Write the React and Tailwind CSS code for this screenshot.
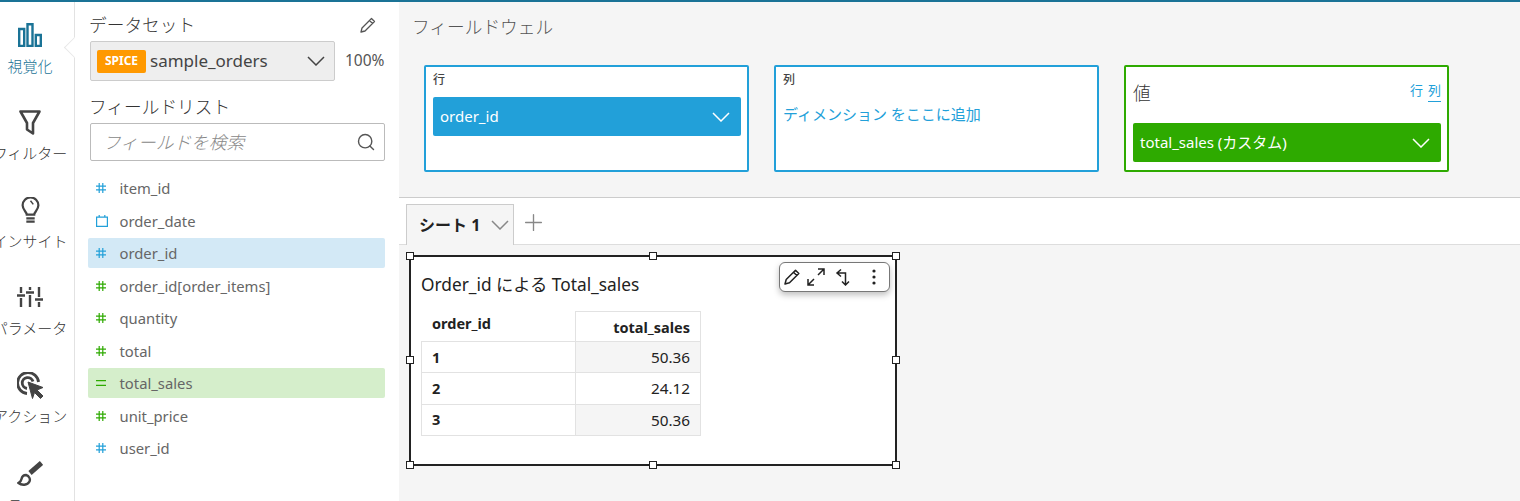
import { Plus, Search } from 'lucide-react';

const FONT = "font-['Noto_Sans','Noto_Sans_CJK_JP',sans-serif]";

const Chevron = ({ className }) => (
  <svg viewBox="0 0 18 10" className={`h-[10px] w-[18px] shrink-0 ${className}`} stroke="currentColor" strokeWidth="1.500" fill="none">
    <path d="M1 1l8 8 8-8" />
  </svg>
);

const Hash = ({ color }) => (
  <svg viewBox="0 0 10 10" className="h-[10px] w-[10px]" stroke={color} strokeWidth="1.200" fill="none">
    <path d="M3.200 0v10M6.800 0v10M0 3.200h10M0 6.800h10" />
  </svg>
);

const Calendar = () => (
  <svg viewBox="0 0 12 12" className="h-[12px] w-[12px]" stroke="#22a0d9" strokeWidth="1.200" fill="none">
    <path d="M.6 2.200h10.800v9.200H.6zM3.200 0v2.200M8.800 0v2.200" />
  </svg>
);

const Equals = () => (
  <svg viewBox="0 0 10 10" className="h-[10px] w-[10px]" stroke="#2eaa00" strokeWidth="1.200" fill="none">
    <path d="M0 2.600h10M0 7.400h10" />
  </svg>
);

const BarsIcon = () => (
  <svg viewBox="0 0 24 24" className="h-[24px] w-[24px]" stroke="#1a7396" strokeWidth="2.400" fill="none">
    <path d="M1.200 6h5v17h-5zM9.500 1.200h5V23h-5zM17.800 12h5v11h-5z" />
  </svg>
);

const FilterIcon = () => (
  <svg viewBox="0 0 22 25" className="h-[25px] w-[22px]" stroke="#444" strokeWidth="2.600" fill="none" strokeLinejoin="round">
    <path d="M1.500 1.500h19L14 13v10.500l-6-4V13z" />
  </svg>
);

const BulbIcon = () => (
  <svg viewBox="0 0 20 28" className="h-[26px] w-[19px]" stroke="#444" fill="none">
    <path d="M6 19c0-3-4.500-5-4.500-10a8.500 8.500 0 0 1 17 0c0 5-4.500 7-4.500 10z" strokeWidth="2.400" />
    <path d="M10 4l3 4" strokeWidth="1.600" />
    <path d="M5.500 23h9M5.500 26.500h9" strokeWidth="2.400" />
  </svg>
);

const SlidersIcon = () => (
  <svg viewBox="0 0 26 22" className="h-[22px] w-[26px]" stroke="#444" strokeWidth="2.400" fill="none">
    <path d="M4 1v6M4 12v9M13 1v3M13 9v12M22 1v10M22 16v5M0 9.500h8M9 6.500h8M18 13.500h8" />
  </svg>
);

const ActionIcon = () => (
  <svg viewBox="0 0 27 27" className="h-[27px] w-[27px]" fill="none" stroke="#444">
    <path d="M10 21.500A10.500 10.500 0 1 1 21.500 10" strokeWidth="2.800" />
    <path d="M10 16.500A5.500 5.500 0 1 1 16 9.500" strokeWidth="2.800" />
    <path d="M11 10l15 5.500-6 2.500 6 6-2.500 2.500-6-6-2 6z" fill="#444" stroke="#444" strokeWidth="1" strokeLinejoin="round" />
  </svg>
);

const BrushIcon = () => (
  <svg viewBox="0 0 26 26" className="h-[26px] w-[26px]" fill="none" stroke="#444">
    <path d="M13 12L24.500 2" strokeWidth="5" />
    <path d="M9 14c-3 0-4 1.500-4.500 4-.3 2-1.500 3-3 4 3 2.500 9 2.500 11-1.500 1-2 0-5.500-3.500-6.500z" strokeWidth="2.400" />
  </svg>
);

const RailItem = ({ icon, label, active, className }) => (
  <div className={`flex w-[60px] flex-col items-center ${className}`}>
    <div className="flex h-[28px] items-center justify-center">{icon}</div>
    <span className={`mt-[7px] whitespace-nowrap text-[15px] leading-[20px] font-light ${active ? 'text-[#1a7396]' : 'text-[#333]'}`}>
      {label}
    </span>
  </div>
);

const fields = [
  { name: 'item_id', icon: <Hash color="#22a0d9" /> },
  { name: 'order_date', icon: <Calendar /> },
  { name: 'order_id', icon: <Hash color="#22a0d9" />, bg: 'bg-[#d3e9f6]' },
  { name: 'order_id[order_items]', icon: <Hash color="#2eaa00" /> },
  { name: 'quantity', icon: <Hash color="#2eaa00" /> },
  { name: 'total', icon: <Hash color="#2eaa00" /> },
  { name: 'total_sales', icon: <Equals />, bg: 'bg-[#d5eecb]' },
  { name: 'unit_price', icon: <Hash color="#2eaa00" /> },
  { name: 'user_id', icon: <Hash color="#22a0d9" /> },
];

const rows = [
  { id: '1', value: '50.36', shade: true },
  { id: '2', value: '24.12', shade: false },
  { id: '3', value: '50.36', shade: true },
];

const Handle = ({ className }) => (
  <div className={`absolute h-[8px] w-[8px] border border-[#222] bg-white ${className}`} />
);

const Pill = ({ label, color }) => (
  <div className={`flex h-[39px] items-center justify-between rounded-[2px] pl-[7px] pr-[11px] text-[15px] text-white ${color}`}>
    <span>{label}</span>
    <Chevron className="text-white" />
  </div>
);

export default function App() {
  return (
    <div className={`flex h-[501px] w-[1520px] flex-col overflow-hidden bg-white ${FONT}`}>
      <div className="h-[2px] shrink-0 bg-[#1a7396]" />
      <div className="flex min-h-0 flex-1">
        {/* Left rail */}
        <div className="relative w-[75px] shrink-0 border-r border-[#e2e2e2]">
          <div className="flex h-full flex-col overflow-hidden">
            <RailItem className="mt-[19px]" icon={<BarsIcon />} label="視覚化" active />
            <RailItem className="mt-[32px]" icon={<FilterIcon />} label="フィルター" />
            <RailItem className="mt-[33px]" icon={<BulbIcon />} label="インサイト" />
            <RailItem className="mt-[32px]" icon={<SlidersIcon />} label="パラメータ" />
            <RailItem className="mt-[33px]" icon={<ActionIcon />} label="アクション" />
            <RailItem className="mt-[34px]" icon={<BrushIcon />} label="テーマ" />
          </div>
          <div className="absolute right-[-8px] top-[37.500px] h-[15px] w-[15px] rotate-45 border-b border-l border-[#e8e8e8] bg-white" />
        </div>

        {/* Field panel */}
        <div className="flex w-[324px] shrink-0 flex-col pl-[13px] pr-[14px]">
          <div className="flex items-center justify-between pl-[1px] pr-[9px] pt-[10px]">
            <span className="text-[17.700px] leading-[26px] font-light text-[#333]">データセット</span>
            <svg viewBox="0 0 16 16" className="h-[16px] w-[16px]" stroke="#555" strokeWidth="1.300" fill="none">
              <path d="M1 15l1-4L11.500 1.500l3 3L5 14zM9.500 3.500l3 3" strokeLinejoin="round" />
            </svg>
          </div>
          <div className="mt-[3px] flex items-center pl-[2px]">
            <div className="flex h-[40px] w-[245px] items-center rounded-[2px] border border-[#ccc] bg-[#eee] pl-[6px] pr-[9px]">
              <span className="flex h-[23px] w-[49px] items-center justify-center rounded-[2px] bg-[#ff9900] text-[12px] font-bold text-white">SPICE</span>
              <span className="ml-[4px] flex-1 text-[17px] text-[#444]">sample_orders</span>
              <Chevron className="text-[#444]" />
            </div>
            <span className="ml-[10px] text-[15.500px] text-[#555]">100%</span>
          </div>
          <div className="mt-[13px] pl-[1px] text-[17.700px] leading-[26px] font-light text-[#333]">フィールドリスト</div>
          <div className="ml-[2px] mt-[3px] flex h-[38px] items-center justify-between rounded-[2px] border border-[#bbb] pl-[12px] pr-[8px]">
            <span className="text-[17.700px] font-light italic text-[#888]">フィールドを検索</span>
            <Search className="h-[20px] w-[20px] text-[#555]" strokeWidth={1.700} />
          </div>
          <div className="mt-[11px] flex flex-col">
            {fields.map((f) => (
              <div key={f.name} className="flex h-[32.500px] items-center">
                <div className={`flex h-[30px] flex-1 items-center rounded-[2px] pl-[8px] text-[14.800px] text-[#666] ${f.bg || ''}`}>
                  <span className="flex w-[23.500px] items-center">{f.icon}</span>
                  <span>{f.name}</span>
                </div>
              </div>
            ))}
          </div>
        </div>

        {/* Main area */}
        <div className="flex min-w-0 flex-1 flex-col bg-[#f5f5f5]">
          <div className="h-[196px] shrink-0 border-b border-[#ccc]">
            <div className="pl-[13px] pt-[12px] text-[17.700px] leading-[26px] font-light text-[#555]">フィールドウェル</div>
            <div className="ml-[25px] mt-[25px] flex gap-[25px]">
              <div className="h-[107px] w-[325px] rounded-[2px] border-2 border-[#22a0d9] bg-white pl-[7px] pr-[6px] pt-[5px]">
                <div className="text-[12px] leading-[16px] font-medium text-[#444]">行</div>
                <div className="mt-[9px]"><Pill label="order_id" color="bg-[#22a0d9]" /></div>
              </div>
              <div className="h-[107px] w-[325px] rounded-[2px] border-2 border-[#22a0d9] bg-white pl-[7px] pr-[6px] pt-[5px]">
                <div className="text-[12px] leading-[16px] font-medium text-[#444]">列</div>
                <div className="mt-[15px] text-[15px] leading-[22px] text-[#22a0d9]">ディメンション をここに追加</div>
              </div>
              <div className="h-[107px] w-[325px] rounded-[2px] border-2 border-[#2eaa00] bg-white pl-[7px] pr-[6px] pt-[13px]">
                <div className="flex h-[26px] items-start justify-between">
                  <span className="text-[17.700px] leading-[26px] font-light text-[#333]">値</span>
                  <div className="flex gap-[5px] pt-[1px] text-[13px] leading-[18px] text-[#22a0d9]">
                    <span>行</span>
                    <span className="h-[21px] border-b border-[#22a0d9]">列</span>
                  </div>
                </div>
                <div className="mt-[17px]"><Pill label="total_sales (カスタム)" color="bg-[#2eaa00]" /></div>
              </div>
            </div>
          </div>

          {/* Sheet tabs */}
          <div className="flex h-[47px] shrink-0 items-end border-b border-[#ddd] bg-white pl-[7px]">
            <div className="mb-[-1px] flex h-[41px] w-[108px] items-center justify-between border border-b-0 border-[#ccc] bg-[#f5f5f5] pl-[12px] pr-[4px]">
              <span className="text-[16px] font-bold text-[#222]">シート 1</span>
              <Chevron className="text-[#888]" />
            </div>
            <Plus className="mb-[8px] ml-[5.500px] h-[27px] w-[27px] text-[#888]" strokeWidth={1.200} />
          </div>

          {/* Visual */}
          <div className="pl-[10px] pt-[10px]">
            <div className="relative h-[211px] w-[488px] border-2 border-[#222] bg-white pl-[10px] pt-[15px]">
              <Handle className="left-[-5px] top-[-5px]" />
              <Handle className="left-[238px] top-[-5px]" />
              <Handle className="right-[-5px] top-[-5px]" />
              <Handle className="left-[-5px] top-[99px]" />
              <Handle className="right-[-5px] top-[99px]" />
              <Handle className="bottom-[-5px] left-[-5px]" />
              <Handle className="bottom-[-5px] left-[238px]" />
              <Handle className="bottom-[-5px] right-[-5px]" />

              <div className="absolute right-[5px] top-[5px] flex h-[30px] w-[111px] items-center rounded-[6px] border border-[#777] bg-white pl-[3px] shadow-[0_3px_6px_rgba(0,0,0,0.25)]">
                <svg viewBox="0 0 18 18" className="h-[18px] w-[18px]" stroke="#222" strokeWidth="1.500" fill="none">
                  <path d="M2 16l1.200-4.500L12.500 2.200l3.300 3.300L6.500 14.800zM10.500 4.200l3.300 3.300" strokeLinejoin="round" />
                </svg>
                <svg viewBox="0 0 18 18" className="ml-[6px] h-[18px] w-[18px]" stroke="#222" strokeWidth="1.500" fill="none">
                  <path d="M1 17l6-6M11 7l6-6M11 1h6v6M1 11v6h6" />
                </svg>
                <svg viewBox="0 0 18 18" className="ml-[10px] h-[18px] w-[18px]" stroke="#222" strokeWidth="1.500" fill="none">
                  <path d="M6 1.500L2 5l4 3.500M2 5h8.500v12M7 13.500l3.500 3.500 3.500-3.500" />
                </svg>
                <svg viewBox="0 0 18 18" className="ml-[12px] h-[18px] w-[18px]" fill="#222">
                  <circle cx="9" cy="3" r="1.600" />
                  <circle cx="9" cy="9" r="1.600" />
                  <circle cx="9" cy="15" r="1.600" />
                </svg>
              </div>

              <div className="text-[17.300px] leading-[26px] text-[#222]">Order_id による Total_sales</div>

              <div className="mt-[13px] grid w-[280px] grid-cols-[154px_126px] text-[14.500px] text-[#222]">
                <div className="h-[31px] border-b border-[#e2e2e2] pl-[11px] pt-[2px] font-bold">order_id</div>
                <div className="flex h-[31px] items-end justify-end border border-[#e2e2e2] pb-[2px] pr-[10px] font-bold">total_sales</div>
                {rows.map((r) => (
                  <div key={r.id} className="contents">
                    <div className="flex h-[31.300px] items-center border-b border-l border-[#e2e2e2] pl-[10px] pt-[1px] font-bold">{r.id}</div>
                    <div className={`flex h-[31.300px] items-center justify-end border-b border-l border-r border-[#e2e2e2] pr-[10px] pt-[1px] text-[15.300px] ${r.shade ? 'bg-[#f5f5f5]' : 'bg-white'}`}>{r.value}</div>
                  </div>
                ))}
              </div>
            </div>
          </div>
        </div>
      </div>
    </div>
  );
}
